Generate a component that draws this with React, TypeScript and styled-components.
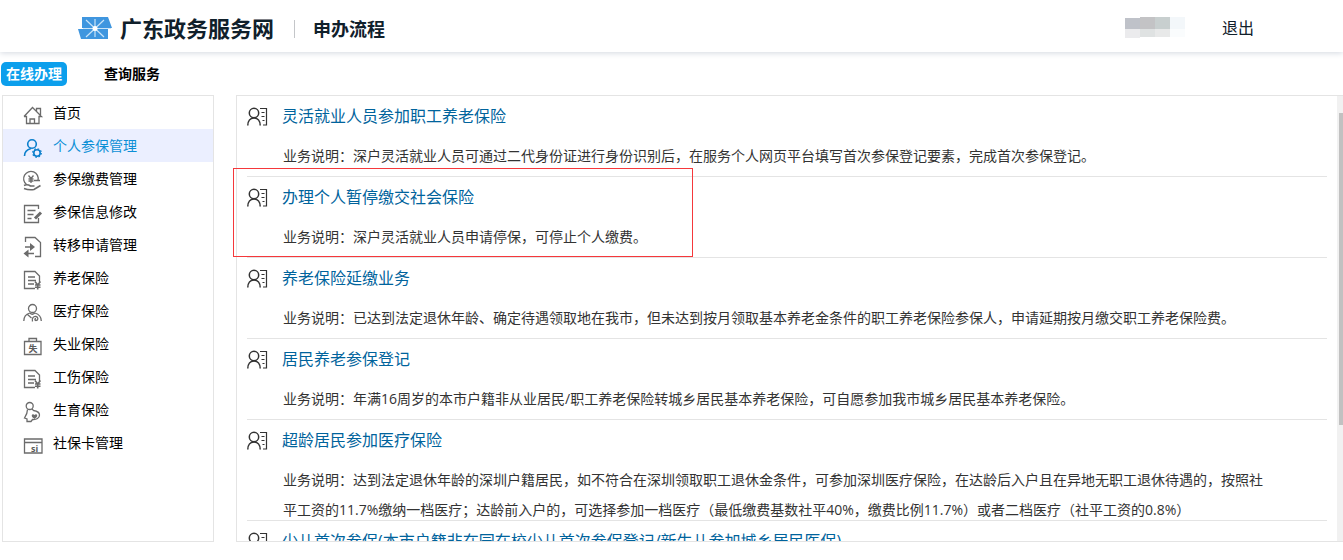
import React from "react";
import styled, { createGlobalStyle, css } from "styled-components";

const GlobalStyle = createGlobalStyle`
  * { box-sizing: border-box; }
  html, body { margin: 0; padding: 0; background: #fff; }
  body, button {
    font-family: "Open Sans", "Noto Sans CJK SC", sans-serif;
    font-size: 14px;
    color: #000;
  }
  ul, h1, h2, p { margin: 0; padding: 0; font-weight: inherit; }
  ul { list-style: none; }
`;

const Page = styled.div`
  display: flex;
  flex-direction: column;
  height: 100vh;
  overflow: hidden;
`;

const Header = styled.header`
  display: flex;
  align-items: center;
  flex: none;
  height: 52px;
  padding: 4px 89px 0 78px;
  box-shadow: 0 1px 6px #d3d8e0;
  color: #10202b;
`;

const LogoIcon = styled.svg`
  display: block;
  width: 34px;
  height: 24px;
  margin-right: 8px;
`;

const SiteName = styled.h1`
  font-size: 22px;
  line-height: 32px;
  font-weight: 700;
`;

const Divider = styled.span`
  width: 1px;
  height: 18px;
  margin: 2px 18px 0 20px;
  background: #c4c6c9;
`;

const SectionName = styled.span`
  padding-top: 2px;
  font-size: 18px;
  line-height: 28px;
  font-weight: 700;
`;

const UserMask = styled.svg`
  display: block;
  width: 60px;
  height: 22px;
  margin: 0 37px 0 auto;
`;

const LogoutButton = styled.button`
  padding: 0;
  border: 0;
  background: none;
  font-size: 16px;
  line-height: 24px;
  color: #10202b;
  cursor: pointer;
`;

const Tabs = styled.nav`
  display: flex;
  flex: none;
  gap: 32px;
  height: 43px;
  padding: 10px 0 0 1px;
`;

const Tab = styled.button<{ $active?: boolean }>`
  height: 24px;
  padding: 0 5px;
  border: 0;
  border-radius: 5px;
  background: ${(p) => (p.$active ? "#0c9fec" : "transparent")};
  color: ${(p) => (p.$active ? "#fff" : "#000")};
  font-weight: 700;
  line-height: 24px;
  cursor: pointer;
`;

const Body = styled.div`
  display: flex;
  flex: 1;
  gap: 22px;
  min-height: 0;
  padding: 0 0 18px 2px;
`;

const panel = css`
  border: 1px solid #e4e4e4;
  background: #fff;
`;

const Sidebar = styled.nav`
  ${panel}
  flex: none;
  width: 212px;
`;

const MenuLink = styled.a<{ $active?: boolean }>`
  display: flex;
  align-items: center;
  gap: 10px;
  height: 33px;
  padding-left: 20px;
  background: ${(p) => (p.$active ? "#ebefff" : "transparent")};
  color: ${(p) => (p.$active ? "#0b8fd6" : "#000")};
  line-height: 33px;
  text-decoration: none;
`;

const MenuIcon = styled.svg<{ $active?: boolean }>`
  flex: none;
  width: 20px;
  height: 20px;
  margin-top: 5px;
  overflow: visible;
  fill: none;
  stroke: ${(p) => (p.$active ? "#0b7fcc" : "#6b6b6b")};
  stroke-width: ${(p) => (p.$active ? 1.6 : 1.3)};

  .solid {
    fill: #6b6b6b;
    stroke: none;
  }
`;

const IconText = styled.text`
  fill: #5c5c5c;
  stroke: none;
  font-size: 9px;
  font-weight: 700;
`;

const Main = styled.main`
  position: relative;
  display: flex;
  flex: 1;
  min-width: 0;
`;

const Content = styled.div`
  ${panel}
  display: flex;
  flex: 1;
  min-width: 0;
  border-right: 0;
  overflow: hidden;
`;

const ServiceList = styled.ul`
  flex: 1;
  min-width: 0;
  padding: 0 10px;
`;

const Service = styled.li`
  min-height: 81px;
  border-bottom: 1px solid #e4e4e4;
`;

const ServiceHead = styled.h2`
  display: flex;
  align-items: center;
  gap: 13px;
  height: 40px;
  font-size: 16px;
`;

const ServiceIcon = styled.svg`
  flex: none;
  width: 22px;
  height: 20px;
  fill: none;
  stroke: #333;
  stroke-width: 1.5;
`;

const ServiceLink = styled.a`
  color: #00639c;
  line-height: 40px;
  text-decoration: none;
  white-space: nowrap;
`;

const Description = styled.p`
  margin: 5px 62px -5px 36px;
  color: #333;
  line-height: 30px;
`;

const ScrollTrack = styled.div`
  flex: none;
  width: 6px;
  padding: 17px 0 0 2px;
  background: #f1f1f1;
`;

const ScrollThumb = styled.div`
  height: 312px;
  background: #c1c1c1;
`;

const Highlight = styled.div`
  position: absolute;
  top: 73px;
  left: -3px;
  width: 460px;
  height: 89px;
  border: 1px solid #f5383b;
  pointer-events: none;
`;

const icons: Record<string, React.ReactNode> = {
  home: <path d="M1 11.500 9.500 2.500l4 4V3.500h4V11M1 11.500h2.500v7h12.500V11.500h2.500L13.500 6.500M7 18.500V14h4.500v4.500" />,
  manage: (
    <>
      <circle cx="9" cy="6" r="4.300" />
      <path d="M1.500 18c0-4 2.500-6.500 6.500-7.500" />
      <circle cx="14" cy="15" r="3.200" />
      <circle cx="14" cy="15" r="4.300" strokeWidth="1.200" strokeDasharray="1.600 1.780" />
    </>
  ),
  pay: (
    <>
      <path d="M3.500 13.500A7.300 7.300 0 1 1 15 9.500M11 9.500h6" />
      <path d="M5.500 4.500 8 7.500l2.500-3M8 7.500V12M5.500 8h5M5.500 10h5" />
      <path d="M1 14.500c3-1.500 5-.5 6.500.5h4M1 17.500c4 1.500 7 1.500 10 1l6.500-4" strokeWidth="1.600" />
    </>
  ),
  edit: (
    <>
      <path d="M15.500 14v4.500h-14v-17h14V5M4.500 6.500h8M4.500 10.500h6M4.500 14.500h4" />
      <path d="m12 14.500 6-6" strokeWidth="3" />
    </>
  ),
  transfer: (
    <>
      <path d="M2.500 5V.5h9.500l5.500 5v14H12M2 10h6M11 16.500H4" />
      <path className="solid" d="m7 6 5 4-5 4zM5.500 12.500l-5 4 5 4z" />
    </>
  ),
  document: (
    <>
      <path d="M12 18.500H1.500V1.500H12l4.500 4.500v6M5 7h7M5 10.500h8M5 14h6" />
      <path d="m12 11.500 2.700 3.500 2.700-3.500M14.700 15v4.500M12 15h5.500M12 17.300h5.500" strokeWidth="1.600" />
    </>
  ),
  medical: (
    <>
      <circle cx="9.500" cy="5.500" r="4" />
      <path d="M.8 18c0-4.500 2.500-7 6-8 1.500 1.500 3.500 1.500 5 0 3.500 1 6.500 3.500 6.500 8M4.500 11.500l4 3.500" />
      <path d="M9.500 18.500c-1-3 1-5.500 3.500-5 2.500.5 2.500 4 0 4-1.500 0-1.500-2 0-2" />
    </>
  ),
  bag: (
    <>
      <path d="M1.500 5.500h16.500v13H1.500zM6 5.500v-3h7.500v3" />
      <IconText x="5.500" y="15.500">失</IconText>
    </>
  ),
  birth: (
    <>
      <circle cx="6.700" cy="4" r="3.500" />
      <path d="M4.500 7.500C4.500 11 3.500 13 1.500 16l2.500 1v2.500h4l1.500-2c4 .5 7-1.500 7-4.500s-3-4-6-4.500L9 7" />
      <path className="solid" d="M11.500 17c-5-3-2-6 0-4 2-2 5 1 0 4z" />
    </>
  ),
  card: (
    <>
      <path d="M1.500 4h17.500v14H1.500zM1.500 7.500h17.500" />
      <IconText x="8" y="16.500">si</IconText>
    </>
  ),
};

const menu = [
  { label: "首页", icon: "home" },
  { label: "个人参保管理", icon: "manage", active: true },
  { label: "参保缴费管理", icon: "pay" },
  { label: "参保信息修改", icon: "edit" },
  { label: "转移申请管理", icon: "transfer" },
  { label: "养老保险", icon: "document" },
  { label: "医疗保险", icon: "medical" },
  { label: "失业保险", icon: "bag" },
  { label: "工伤保险", icon: "document" },
  { label: "生育保险", icon: "birth" },
  { label: "社保卡管理", icon: "card" },
];

const services = [
  {
    title: "灵活就业人员参加职工养老保险",
    text: "业务说明：深户灵活就业人员可通过二代身份证进行身份识别后，在服务个人网页平台填写首次参保登记要素，完成首次参保登记。",
  },
  {
    title: "办理个人暂停缴交社会保险",
    text: "业务说明：深户灵活就业人员申请停保，可停止个人缴费。",
  },
  {
    title: "养老保险延缴业务",
    text: "业务说明：已达到法定退休年龄、确定待遇领取地在我市，但未达到按月领取基本养老金条件的职工养老保险参保人，申请延期按月缴交职工养老保险费。",
  },
  {
    title: "居民养老参保登记",
    text: "业务说明：年满16周岁的本市户籍非从业居民/职工养老保险转城乡居民基本养老保险，可自愿参加我市城乡居民基本养老保险。",
  },
  {
    title: "超龄居民参加医疗保险",
    text: "业务说明：达到法定退休年龄的深圳户籍居民，如不符合在深圳领取职工退休金条件，可参加深圳医疗保险，在达龄后入户且在异地无职工退休待遇的，按照社平工资的11.7%缴纳一档医疗；达龄前入户的，可选择参加一档医疗（最低缴费基数社平40%，缴费比例11.7%）或者二档医疗（社平工资的0.8%）",
  },
  { title: "少儿首次参保(本市户籍非在园在校少儿首次参保登记/新生儿参加城乡居民医保)", text: "" },
];

export default function App() {
  return (
    <Page>
      <GlobalStyle />
      <Header>
        <LogoIcon viewBox="0 0 34 24" aria-hidden="true">
          <path d="M4 1h26l4 11H4zM0 13h30v10H3z" fill="#3f96df" />
          <path d="M17 3v18M5 12.500h28M8 4l18 17M26 4 8 21" stroke="#c9e4f8" strokeWidth="1.200" />
          <circle cx="17" cy="12.500" r="2.500" fill="#fff" />
        </LogoIcon>
        <SiteName>广东政务服务网</SiteName>
        <Divider />
        <SectionName>申办流程</SectionName>
        <UserMask viewBox="0 0 60 22" aria-hidden="true">
          <path d="M0 1h15v11H0z" fill="#bfc2c9" />
          <path d="M15 0h15v12H15z" fill="#c3c3c5" />
          <path d="M30 0h15v12H30z" fill="#c8cfcf" />
          <path d="M45 0h15v12H45z" fill="#f3f7fa" />
          <path d="M0 12h15v9H0z" fill="#ebebed" />
          <path d="M15 12h15v8H15z" fill="#dfe2e2" />
          <path d="M30 12h15v8H30z" fill="#e8e9e9" />
          <path d="M45 12h15v8H45z" fill="#fafcfd" />
        </UserMask>
        <LogoutButton type="button">退出</LogoutButton>
      </Header>
      <Tabs>
        <Tab type="button" $active>在线办理</Tab>
        <Tab type="button">查询服务</Tab>
      </Tabs>
      <Body>
        <Sidebar>
          {menu.map((m) => (
            <MenuLink key={m.label} href="#" $active={m.active}>
              <MenuIcon viewBox="0 0 20 20" $active={m.active} aria-hidden="true">
                {icons[m.icon]}
              </MenuIcon>
              {m.label}
            </MenuLink>
          ))}
        </Sidebar>
        <Main>
          <Content>
            <ServiceList>
              {services.map((s) => (
                <Service key={s.title}>
                  <ServiceHead>
                    <ServiceIcon viewBox="0 0 22 20" aria-hidden="true">
                      <circle cx="7" cy="7" r="4.700" />
                      <path d="M.8 19.500c0-4.500 2.500-7.500 6.200-7.500s6.200 3 6.200 7.500" />
                      <path d="M13 2.500h6.500v16.500H16M14.500 6.500h3M14.500 10.500h3M15.500 14.500h2" strokeWidth="1.200" />
                    </ServiceIcon>
                    <ServiceLink href="#">{s.title}</ServiceLink>
                  </ServiceHead>
                  {s.text && <Description>{s.text}</Description>}
                </Service>
              ))}
            </ServiceList>
            <ScrollTrack>
              <ScrollThumb />
            </ScrollTrack>
          </Content>
          <Highlight />
        </Main>
      </Body>
    </Page>
  );
}
